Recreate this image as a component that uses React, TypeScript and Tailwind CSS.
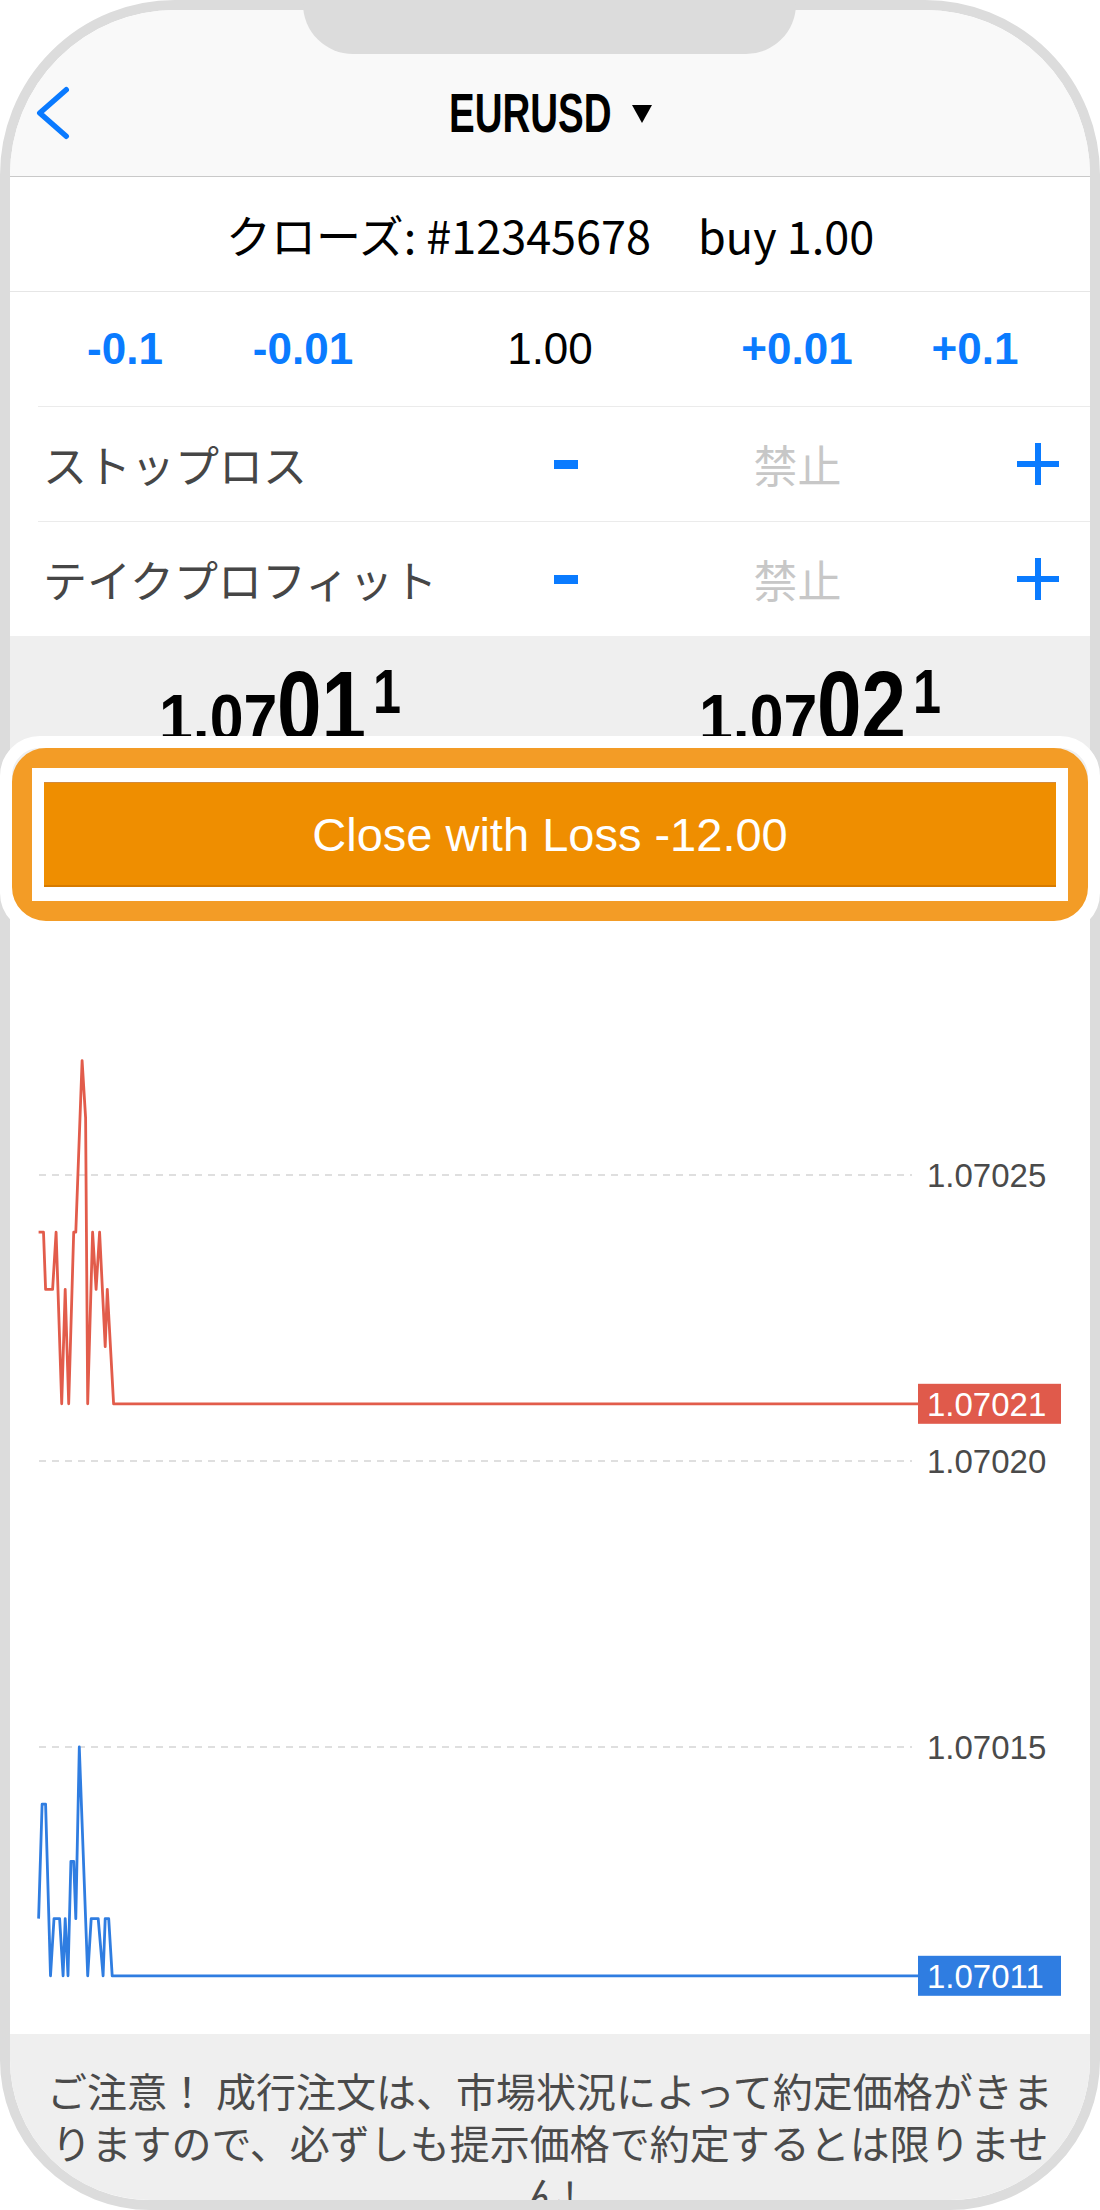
import React from 'react';

const latin = "font-['Liberation_Sans',Arial,sans-serif]";
const jp = "font-['Noto_Sans_CJK_JP','Noto_Sans',sans-serif]";

// price in 0.00001 steps above 1.07000 -> chart y
const STEP = 57.2;
const yOf = (v: number) => 528 - (v - 20) * STEP;

const bidTicks: [number, number][] = [
  [28.6, 24], [33.5, 24], [35.6, 23], [42.6, 23], [46.1, 24], [51.7, 21], [55.2, 23],
  [58.7, 21], [63.7, 24], [65.8, 24], [72.1, 27], [75.6, 26], [77.7, 21], [82.6, 24],
  [86.1, 23], [89.6, 24], [95.2, 22], [97.3, 23], [103.6, 21], [908, 21]
];

const askTicks: [number, number][] = [
  [28.6, 12], [32.1, 14], [35.6, 14], [40.5, 11], [44, 12], [49.6, 12], [53.1, 11],
  [55.2, 12], [58, 11], [60.9, 13], [63.7, 13], [65.8, 12], [69.3, 15], [77.7, 11],
  [81.2, 12], [88.2, 12], [93.1, 11], [95.2, 12], [98.7, 12], [102.2, 11], [908, 11]
];

const toPoints = (pts: [number, number][]) =>
  pts.map(([x, v]) => `${x},${yOf(v).toFixed(1)}`).join(' ');

const gridLines = [
  { v: 25, label: '1.07025' },
  { v: 20, label: '1.07020' },
  { v: 15, label: '1.07015' }
];

function TickChart() {
  const font = "'Liberation Sans', Arial, sans-serif";
  return (
    <svg width="1080" height="1101" viewBox="0 0 1080 1101" className="block">
      {gridLines.map(g => (
        <g key={g.label}>
          <line x1="29" x2="902" y1={yOf(g.v)} y2={yOf(g.v)} stroke="#d5d5d5" strokeWidth="1.5" strokeDasharray="7 6" />
          <text x="917" y={yOf(g.v) + 12} fontSize="33" fill="#4a4a4a" fontFamily={font}>
            {g.label}
          </text>
        </g>
      ))}

      <polyline points={toPoints(bidTicks)} fill="none" stroke="#e25c4b" strokeWidth="2.8" strokeLinejoin="round" />
      <rect x="908" y={yOf(21) - 20} width="143" height="40" fill="#e05a4b" />
      <text x="917" y={yOf(21) + 12} fontSize="33" fill="#ffffff" fontFamily={font}>
        1.07021
      </text>

      <polyline points={toPoints(askTicks)} fill="none" stroke="#2f7de1" strokeWidth="2.8" strokeLinejoin="round" />
      <rect x="908" y={yOf(11) - 20} width="143" height="40" fill="#2f7de1" />
      <text x="917" y={yOf(11) + 12} fontSize="33" fill="#ffffff" fontFamily={font}>
        1.07011
      </text>
    </svg>
  );
}

function PlusIcon() {
  return (
    <svg width="42" height="42" viewBox="0 0 42 42">
      <path d="M21 0V42M0 21H42" stroke="#0a7bff" strokeWidth="6" />
    </svg>
  );
}

function LevelRow({ label, divider }: { label: string; divider: boolean }) {
  return (
    <div className="flex flex-col">
      <div className="grid grid-cols-[467px_112px_351px_1fr] items-center h-[114px] pl-[33px] pr-[31px]">
        <span className={`${jp} text-[44px] leading-none text-[#464646]`}>{label}</span>
        <div className="justify-self-center h-[9px] w-[24px] bg-[#0a7bff]" />
        <span className={`${jp} justify-self-center text-[44px] leading-none text-[#c7c7c7]`}>禁止</span>
        <div className="justify-self-end flex">
          <PlusIcon />
        </div>
      </div>
      {divider && <div className="h-px ml-[28px] bg-[#ebebeb]" />}
    </div>
  );
}

function Price({ head, big, tail }: { head: string; big: string; tail: string }) {
  return (
    <div className="flex justify-center pt-[20px]">
      <div className={`${latin} flex items-baseline font-bold text-black leading-none`}>
        <span className="w-[118px] whitespace-nowrap">
          <span className="inline-block origin-left scale-x-[0.92] text-[66px] leading-none">{head}</span>
        </span>
        <span className="w-[89px] whitespace-nowrap">
          <span className="inline-block origin-left scale-x-[0.8] text-[100px] leading-none">{big}</span>
        </span>
        <span className="self-start mt-[4px] ml-[7px] w-[28px] whitespace-nowrap">
          <span className="inline-block origin-left scale-x-[0.8] text-[63px] leading-none">{tail}</span>
        </span>
      </div>
    </div>
  );
}

export default function App() {
  const steps = [
    { text: '-0.1', blue: true },
    { text: '-0.01', blue: true },
    { text: '1.00', blue: false },
    { text: '+0.01', blue: true },
    { text: '+0.1', blue: true }
  ];

  return (
    <div className="relative w-[1100px] h-[2210px] bg-white">
      <div className="h-full border-[10px] border-[#dcdcdc] rounded-t-[175px] rounded-b-[150px] overflow-hidden flex flex-col bg-white">
        {/* nav bar */}
        <header className="h-[167px] shrink-0 bg-[#f9f9f9] border-b border-[#c9c9c9] flex flex-col pt-[50px] pb-[10px]">
          <div className="h-[106px] grid grid-cols-[150px_1fr_150px] items-center">
            <div className="pl-[27px] flex">
              <svg width="32" height="52" viewBox="0 0 32 52" className="overflow-visible">
                <polyline
                  points="29.25,2.75 2.75,26 29.25,49.25"
                  fill="none"
                  stroke="#0a7aff"
                  strokeWidth="5.5"
                  strokeLinecap="round"
                  strokeLinejoin="round"
                />
              </svg>
            </div>
            <div className="flex items-center justify-center gap-[20px]">
              <span className="w-[163px] flex">
                <span className={`${latin} inline-block origin-left scale-x-[0.7] text-[55px] font-bold leading-none text-black whitespace-nowrap`}>
                  EURUSD
                </span>
              </span>
              <svg width="20" height="20" viewBox="0 0 20 20">
                <polygon points="0,2 20,2 10,20" fill="#000" />
              </svg>
            </div>
            <div />
          </div>
        </header>

        {/* order line */}
        <div className={`${jp} h-[115px] shrink-0 border-b border-[#e6e6e6] flex items-center justify-center gap-[47px] text-[45px] leading-none text-black`}>
          <span>クローズ: #12345678</span>
          <span>buy 1.00</span>
        </div>

        {/* volume steps */}
        <div className="flex flex-col shrink-0">
          <div className={`${latin} grid grid-cols-[178px_178px_1fr_178px_178px] items-center h-[114px] px-[26px] text-[44px] leading-none`}>
            {steps.map(s => (
              <span key={s.text} className={s.blue ? 'text-center font-bold text-[#0a7bff]' : 'text-center text-black'}>
                {s.text}
              </span>
            ))}
          </div>
          <div className="h-px ml-[28px] bg-[#ebebeb]" />
        </div>

        <LevelRow label="ストップロス" divider />
        <LevelRow label="テイクプロフィット" divider={false} />

        {/* bid / ask */}
        <div className="h-[146px] shrink-0 bg-[#efefef] grid grid-cols-2 overflow-hidden">
          <Price head="1.07" big="01" tail="1" />
          <Price head="1.07" big="02" tail="1" />
        </div>

        {/* close button */}
        <div className="shrink-0 px-[34px] pb-[46px]">
          <button className={`${latin} w-full h-[105px] bg-[#ef8e00] border-t border-t-[#d38a3c] border-b-2 border-b-[#d77b00] text-white text-[47px] leading-none flex items-center justify-center`}>
            Close with Loss -12.00
          </button>
        </div>

        {/* tick chart */}
        <div className="h-[1101px] shrink-0 bg-white">
          <TickChart />
        </div>

        {/* notice */}
        <div className={`${jp} flex-1 bg-[#efefef] px-[30px] pt-[30px] text-center text-[40px] leading-[52px] text-[#4a4a4a]`}>
          ご注意！ 成行注文は、市場状況によって約定価格がきまりますので、必ずしも提示価格で約定するとは限りません!
        </div>
      </div>

      {/* notch */}
      <div className="absolute top-0 left-[303px] w-[493px] h-[54px] bg-[#dcdcdc] rounded-b-[50px]" />

      {/* highlight around the close button */}
      <div className="absolute left-0 top-[736px] w-[1100px] h-[197px] rounded-[40px] border-[12px] border-white">
        <div className="h-full rounded-[34px] border-[20px] border-[#f39c26]">
          <div className="h-full border-x-[12px] border-y-[14px] border-white" />
        </div>
      </div>
    </div>
  );
}
